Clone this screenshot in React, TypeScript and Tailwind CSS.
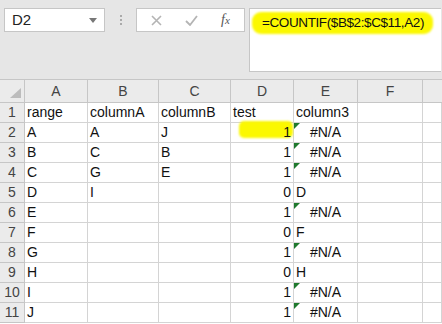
const cols = ['A', 'B', 'C', 'D', 'E', 'F'];
const widths = 'grid-cols-[25px_63px_71px_72px_63px_64px_65px_1fr]';

type Row = { a: string; b: string; c: string; d: string; e: string; na: boolean };

const rows: Row[] = [
  { a: 'A', b: 'A', c: 'J', d: '1', e: '#N/A', na: true },
  { a: 'B', b: 'C', c: 'B', d: '1', e: '#N/A', na: true },
  { a: 'C', b: 'G', c: 'E', d: '1', e: '#N/A', na: true },
  { a: 'D', b: 'I', c: '', d: '0', e: 'D', na: false },
  { a: 'E', b: '', c: '', d: '1', e: '#N/A', na: true },
  { a: 'F', b: '', c: '', d: '0', e: 'F', na: false },
  { a: 'G', b: '', c: '', d: '1', e: '#N/A', na: true },
  { a: 'H', b: '', c: '', d: '0', e: 'H', na: false },
  { a: 'I', b: '', c: '', d: '1', e: '#N/A', na: true },
  { a: 'J', b: '', c: '', d: '1', e: '#N/A', na: true },
];

const cell = 'h-[20px] border-r border-b border-[#d4d4d4] bg-white flex items-center overflow-visible whitespace-nowrap';
const rowHead = 'h-[20px] border-r border-b border-[#c6c6c6] bg-[#ebebeb] flex items-center justify-center text-[#444]';

function Toolbar() {
  return (
    <div className="h-[79px] bg-[#e6e6e6] flex items-start pt-[8px] pl-[4px]">
      <div className="w-[101px] h-[24px] bg-white border border-[#c6c6c6] flex items-center justify-between pl-[7px] pr-[7px]">
        <span className="text-[15px] text-[#222]">D2</span>
        <svg width="8" height="5" viewBox="0 0 8 5">
          <path d="M0 0 L8 0 L4 5 Z" fill="#777" />
        </svg>
      </div>
      <div className="w-[31px] h-[24px] flex flex-col items-center justify-center gap-[2px]">
        <span className="w-[2px] h-[2px] bg-[#aaa]" />
        <span className="w-[2px] h-[2px] bg-[#aaa]" />
        <span className="w-[2px] h-[2px] bg-[#aaa]" />
      </div>
      <div className="w-[109px] h-[24px] bg-white border border-[#c6c6c6] flex items-center">
        <svg className="ml-[14px]" width="11" height="11" viewBox="0 0 11 11">
          <path d="M1 1 L10 10 M10 1 L1 10" stroke="#b4b4b4" strokeWidth="1.6" />
        </svg>
        <svg className="ml-[23px]" width="13" height="11" viewBox="0 0 13 11">
          <path d="M1 6 L5 10 L12 1" stroke="#b4b4b4" strokeWidth="1.8" fill="none" />
        </svg>
        <span className="ml-[23px] text-[14px] italic text-[#555] font-['Liberation_Serif',serif] leading-none">
          f<span className="text-[11px]">x</span>
        </span>
      </div>
      <div className="relative ml-[4px] w-[192px] h-[64px] bg-white border border-[#c6c6c6] border-r-0">
        <div className="absolute left-[2px] top-[3px] w-[181px] h-[22px] bg-[#fbf800] rounded-[9px] blur-[1px]" />
        <span className="relative block pl-[12px] pt-[4px] text-[13.5px] tracking-[-0.4px] text-[#111]">
          =COUNTIF($B$2:$C$11,A2)
        </span>
      </div>
    </div>
  );
}

export default function App() {
  return (
    <div className="w-[442px] h-[324px] overflow-hidden bg-white font-['Liberation_Sans',Arial,sans-serif] text-[14px] text-[#111]">
      <Toolbar />
      <div className={`grid ${widths}`}>
        {/* column headers */}
        <div className="h-[24px] border-t border-r border-b border-[#c6c6c6] bg-[#ebebeb] relative">
          <svg className="absolute right-[3px] bottom-[4px]" width="11" height="10" viewBox="0 0 11 10">
            <path d="M11 0 L11 10 L0 10 Z" fill="#bcbcbc" />
          </svg>
        </div>
        {cols.map((c) => (
          <div
            key={c}
            className="h-[24px] border-t border-r border-b border-[#c6c6c6] bg-[#ebebeb] flex items-center justify-center text-[#444]"
          >
            {c}
          </div>
        ))}
        <div className="h-[24px] border-t border-b border-[#c6c6c6] bg-[#ebebeb]" />

        {/* row 1 */}
        <div className={rowHead}>1</div>
        <div className={`${cell} pl-[2px]`}>range</div>
        <div className={`${cell} pl-[2px]`}>columnA</div>
        <div className={`${cell} pl-[2px]`}>columnB</div>
        <div className={`${cell} pl-[2px]`}>test</div>
        <div className={`${cell} pl-[2px]`}>column3</div>
        <div className={cell} />
        <div className={cell} />

        {rows.map((r, i) => (
          <Line key={i} n={i + 2} r={r} />
        ))}
      </div>
    </div>
  );
}

function Line({ n, r }: { n: number; r: Row }) {
  return (
    <>
      <div className={rowHead}>{n}</div>
      <div className={`${cell} pl-[2px]`}>{r.a}</div>
      <div className={`${cell} pl-[2px]`}>{r.b}</div>
      <div className={`${cell} pl-[2px]`}>{r.c}</div>
      <div className={`${cell} relative justify-end pr-[2px]`}>
        {n === 2 && (
          <div className="absolute left-[8px] top-[-2px] w-[54px] h-[17px] bg-[#fbf800] rounded-[5px] blur-[1px]" />
        )}
        <span className="relative">{r.d}</span>
      </div>
      <div className={`${cell} relative ${r.na ? 'justify-center' : 'pl-[2px]'}`}>
        {r.na && (
          <svg className="absolute left-0 top-0" width="6" height="6" viewBox="0 0 6 6">
            <path d="M0 0 L6 0 L0 6 Z" fill="#1f7a2e" />
          </svg>
        )}
        {r.e}
      </div>
      <div className={cell} />
      <div className={cell} />
    </>
  );
}
